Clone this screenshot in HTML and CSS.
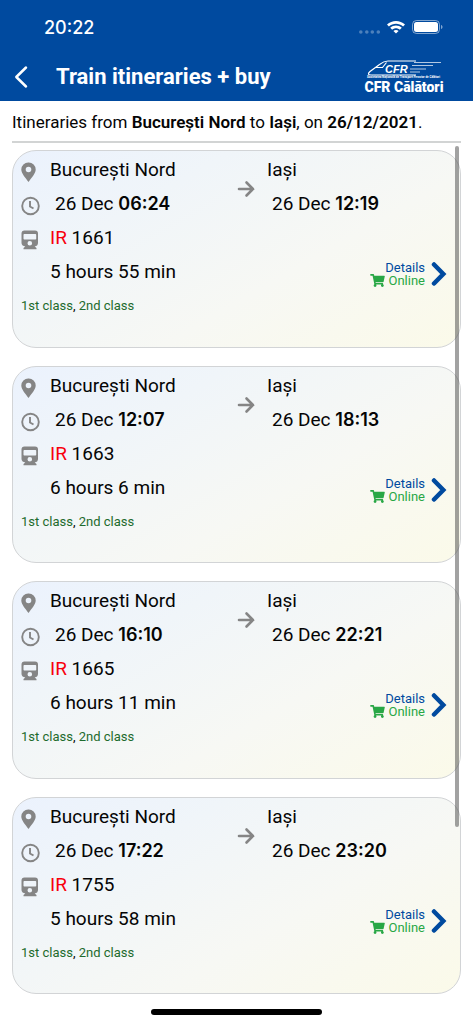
FILE: index.html
```html
<!DOCTYPE html>
<html lang="en">
<head>
<meta charset="utf-8">
<meta name="viewport" content="width=device-width, initial-scale=1">
<title>Train itineraries + buy</title>
<link rel="stylesheet" href="styles.css">
</head>
<body>
<svg class="sprite" aria-hidden="true">
  <symbol id="pin" viewBox="0 0 18 20"><path fill-rule="evenodd" d="M7.500.5A7 7 0 0 0 .3 7.600c0 3.900 4.200 8.400 7.200 12.400 3-4 7.200-8.500 7.200-12.400A7 7 0 0 0 7.500.5zm0 4.200a2.800 2.800 0 1 1 0 5.600 2.800 2.800 0 0 1 0-5.600z"/></symbol>
  <symbol id="clock" viewBox="0 0 20 20"><circle cx="9.500" cy="10" r="8.300" fill="none" stroke="currentColor" stroke-width="1.900"/><path d="M9 5v5.500l3.500 2" fill="none" stroke="currentColor" stroke-width="1.900"/></symbol>
  <symbol id="train" viewBox="0 0 18 20"><path fill-rule="evenodd" d="M3.500.5h10.500c2 0 3 1.200 3 3v9.500c0 2-1.300 3.200-3.300 3.500l1.800 1.500v1.200H2.500V18l1.800-1.500C2.200 16.200.5 15 .5 13V3.500c0-1.800 1-3 3-3zM3.500 4c-.6 0-1 .4-1 1v3.500c0 .6.4 1 1 1h10.700c.6 0 1-.4 1-1V5c0-.6-.4-1-1-1zM8.800 11a2.300 2.300 0 1 0 0 4.600 2.300 2.300 0 0 0 0-4.600z"/></symbol>
  <symbol id="arrow" viewBox="0 0 18 18"><path d="M2 9h14M9.500 2.500 16 9l-6.500 6.500" fill="none" stroke="currentColor" stroke-width="2.600" stroke-linecap="round" stroke-linejoin="miter"/></symbol>
  <symbol id="cart" viewBox="0 0 576 512"><path d="M528.100 301.300l47.300-208C578.800 78.300 567.400 64 552 64H159.200l-9.200-44.800C147.800 8 137.900 0 126.500 0H24C10.700 0 0 10.700 0 24v16c0 13.300 10.700 24 24 24h69.900l70.200 343.400C147.300 417.100 136 435.200 136 456c0 30.900 25.100 56 56 56s56-25.100 56-56c0-15.700-6.400-29.800-16.800-40h209.600C430.400 426.200 424 440.300 424 456c0 30.900 25.100 56 56 56s56-25.100 56-56c0-22.200-12.900-41.300-31.600-50.400l5.500-24.300c3.400-15-8-29.300-23.400-29.300H218.100l-6.500-32h293.100c11.200 0 20.900-7.800 23.400-18.700z"/></symbol>
  <symbol id="chevron" viewBox="0 0 16 26"><path d="M3 3.500 12.300 13 3 22.500" fill="none" stroke="currentColor" stroke-width="4.500" stroke-linecap="round"/></symbol>
</svg>

<header class="top">
  <div class="status">
    <span class="status-time">20:22</span>
    <svg class="status-icons" viewBox="0 0 86 18" aria-hidden="true">
      <g fill="#fff" opacity=".3"><circle cx="1.800" cy="13" r="1.800"/><circle cx="7.800" cy="13" r="1.800"/><circle cx="13.300" cy="13" r="1.800"/><circle cx="19.300" cy="13" r="1.800"/></g>
      <path fill="#fff" d="M28 5.500c5-4.800 13-4.800 18 0l-1.900 2c-4-3.800-10.200-3.800-14.200 0zM31.200 8.700c3.300-3 8.300-3 11.600 0l-2 2c-2.200-2-5.400-2-7.600 0zM34.400 11.900c1.500-1.300 3.700-1.300 5.200 0L37 14.600z"/>
      <rect x="53.500" y="1.500" width="27" height="13" rx="4" fill="none" stroke="#fff" opacity=".5"/>
      <rect x="55" y="3" width="24" height="10" rx="2.500" fill="#fff"/>
      <path d="M82 6c2 .5 2 3.500 0 4z" fill="#fff" opacity=".5"/>
    </svg>
  </div>
  <div class="nav">
    <button class="back" type="button" aria-label="Back">
      <svg viewBox="0 0 16 24"><path d="M13 2.500 3.300 12l9.700 9.500" fill="none" stroke="currentColor" stroke-width="2.500" stroke-linecap="round" stroke-linejoin="round"/></svg>
    </button>
    <h1 class="title">Train itineraries + buy</h1>
    <div class="logo">
      <svg class="logo-train" viewBox="0 0 80 20" aria-hidden="true">
        <path d="M52 2H24c-4 0-6 1.500-8.500 3.500L6 12.500C3.500 14.800 4 16 7 16h45M12 8.500h6.500l4-5" fill="none" stroke="#fff" stroke-width="1.200"/>
        <path d="M50 3.500h27M48 6.500h21M46 10h16M46 13h10" stroke="#fff" stroke-width=".7"/>
        <text class="logo-cfr" x="21" y="13.500">CFR</text>
        <text class="logo-small" x="3" y="19.300">Societatea Națională de Transport Feroviar de Călători</text>
      </svg>
      <span class="logo-name">CFR Călători</span>
    </div>
  </div>
</header>

<main class="content">
  <p class="summary">Itineraries from <b>București Nord</b> to <b>Iași</b>, on <b>26/12/2021</b>.</p>
  <div class="list">
    <article class="card">
      <svg class="icon pin"><use href="#pin"/></svg><span class="from">București Nord</span>
      <svg class="icon arrow"><use href="#arrow"/></svg><span class="to">Iași</span>
      <svg class="icon clock"><use href="#clock"/></svg><span class="from time">26 Dec <b>06:24</b></span><span class="to time">26 Dec <b>12:19</b></span>
      <svg class="icon train"><use href="#train"/></svg><span class="from"><span class="kind">IR</span> 1661</span>
      <span class="from duration">5 hours 55 min</span>
      <a class="action" href="#details"><span class="action-text"><span>Details</span><span class="online"><svg class="cart"><use href="#cart"/></svg>Online</span></span><svg class="chevron"><use href="#chevron"/></svg></a>
      <span class="classes"><span class="class">1st class</span>, <span class="class">2nd class</span></span>
    </article>
    <article class="card">
      <svg class="icon pin"><use href="#pin"/></svg><span class="from">București Nord</span>
      <svg class="icon arrow"><use href="#arrow"/></svg><span class="to">Iași</span>
      <svg class="icon clock"><use href="#clock"/></svg><span class="from time">26 Dec <b>12:07</b></span><span class="to time">26 Dec <b>18:13</b></span>
      <svg class="icon train"><use href="#train"/></svg><span class="from"><span class="kind">IR</span> 1663</span>
      <span class="from duration">6 hours 6 min</span>
      <a class="action" href="#details"><span class="action-text"><span>Details</span><span class="online"><svg class="cart"><use href="#cart"/></svg>Online</span></span><svg class="chevron"><use href="#chevron"/></svg></a>
      <span class="classes"><span class="class">1st class</span>, <span class="class">2nd class</span></span>
    </article>
    <article class="card">
      <svg class="icon pin"><use href="#pin"/></svg><span class="from">București Nord</span>
      <svg class="icon arrow"><use href="#arrow"/></svg><span class="to">Iași</span>
      <svg class="icon clock"><use href="#clock"/></svg><span class="from time">26 Dec <b>16:10</b></span><span class="to time">26 Dec <b>22:21</b></span>
      <svg class="icon train"><use href="#train"/></svg><span class="from"><span class="kind">IR</span> 1665</span>
      <span class="from duration">6 hours 11 min</span>
      <a class="action" href="#details"><span class="action-text"><span>Details</span><span class="online"><svg class="cart"><use href="#cart"/></svg>Online</span></span><svg class="chevron"><use href="#chevron"/></svg></a>
      <span class="classes"><span class="class">1st class</span>, <span class="class">2nd class</span></span>
    </article>
    <article class="card">
      <svg class="icon pin"><use href="#pin"/></svg><span class="from">București Nord</span>
      <svg class="icon arrow"><use href="#arrow"/></svg><span class="to">Iași</span>
      <svg class="icon clock"><use href="#clock"/></svg><span class="from time">26 Dec <b>17:22</b></span><span class="to time">26 Dec <b>23:20</b></span>
      <svg class="icon train"><use href="#train"/></svg><span class="from"><span class="kind">IR</span> 1755</span>
      <span class="from duration">5 hours 58 min</span>
      <a class="action" href="#details"><span class="action-text"><span>Details</span><span class="online"><svg class="cart"><use href="#cart"/></svg>Online</span></span><svg class="chevron"><use href="#chevron"/></svg></a>
      <span class="classes"><span class="class">1st class</span>, <span class="class">2nd class</span></span>
    </article>
    <div class="scroll-thumb"></div>
  </div>
</main>
<footer class="home"><div class="home-bar"></div></footer>
</body>
</html>
```
FILE: styles.css
```css
* { box-sizing: border-box; }

body {
  margin: 0;
  min-height: 100vh;
  display: flex;
  flex-direction: column;
  background: #fff;
  color: #050505;
  font-family: Roboto, "Noto Sans", sans-serif;
}

.sprite { display: none; }
svg { display: block; flex: none; }

.top { background: #004a9f; color: #fff; }

.status {
  height: 52px;
  padding: 4px 28px 0 44px;
  display: flex;
  justify-content: space-between;
  align-items: center;
}
.status-time { font: 500 18px/24px Inter, sans-serif; }
.status-icons { width: 86px; height: 18px; }

.nav {
  height: 49px;
  padding: 0 29px 0 13px;
  display: flex;
  align-items: center;
}
.back {
  width: 16px;
  padding: 0;
  border: 0;
  background: none;
  color: inherit;
}
.back svg { width: 16px; height: 24px; }
.title {
  flex: 1;
  margin: 0 0 0 27px;
  font-size: 22px;
  line-height: 28px;
  font-weight: 700;
}
.logo { width: 80px; }
.logo-train { width: 80px; height: 20px; }
.logo-cfr { font: italic 700 11px "Liberation Sans", sans-serif; fill: #fff; }
.logo-small { font: 700 3px Roboto, sans-serif; fill: #fff; }
.logo-name {
  display: block;
  white-space: nowrap;
  text-align: center;
  font: 900 14px/16px Roboto, sans-serif;
}

.content { flex: 1; display: flex; flex-direction: column; }

.summary {
  margin: 0 12px;
  padding: 10px 0 8px;
  border-bottom: 2px solid #d2d4d4;
  font-size: 17px;
  line-height: 22px;
}
.summary b { font-weight: 600; }

.list {
  position: relative;
  flex: 1;
  display: grid;
  grid-auto-rows: 1fr;
  gap: 18px;
  padding: 7px 12px 0;
}

.card {
  display: grid;
  grid-template-columns: 29px 187px 30px 1fr;
  grid-template-rows: repeat(5, 34px);
  align-items: center;
  padding: 2px 13px 20px 8px;
  border: 1px solid #d2d4d6;
  border-radius: 24px;
  background: linear-gradient(150deg, #ebf2fd 0%, #f0f5f9 28%, #f7f8f4 62%, #fbfae9 100%);
  font-size: 19px;
  line-height: 24px;
}
.icon { color: #858585; fill: currentColor; grid-column: 1; margin-top: 4px; }
.pin { width: 18px; height: 20px; grid-row: 1; }
.clock { width: 20px; height: 20px; grid-row: 2; }
.train { width: 18px; height: 20px; grid-row: 3; }
.arrow { width: 18px; height: 18px; grid-column: 3; grid-row: 1 / 3; }
.from { grid-column: 2; }
.to { grid-column: 4; }
.time { padding-left: 5px; grid-row: 2; }
.time b { font: 600 18px/24px Inter, sans-serif; }
.kind { color: #f8000c; }
.duration { grid-row: 4; }

.action {
  grid-column: 3 / 5;
  grid-row: 4;
  justify-self: end;
  margin-top: 4px;
  display: flex;
  align-items: center;
  gap: 6px;
  color: #004a9f;
  text-decoration: none;
  font-size: 13px;
  line-height: 13px;
}
.action-text { display: flex; flex-direction: column; align-items: flex-end; }
.online { display: flex; gap: 3px; color: #28a745; }
.cart { width: 15px; height: 13px; fill: currentColor; }
.chevron { width: 16px; height: 26px; }

.classes { grid-column: 1 / 5; grid-row: 5; font-size: 13px; line-height: 16px; }
.class { color: #1e6b2d; }

.scroll-thumb {
  position: absolute;
  top: 3px;
  right: 14px;
  width: 4px;
  height: 80%;
  border-radius: 2px;
  background: rgba(70, 70, 70, .5);
}

.home { padding: 15px 0 9px; display: flex; justify-content: center; }
.home-bar { width: 36%; height: 6px; border-radius: 3px; background: #000; }
```
